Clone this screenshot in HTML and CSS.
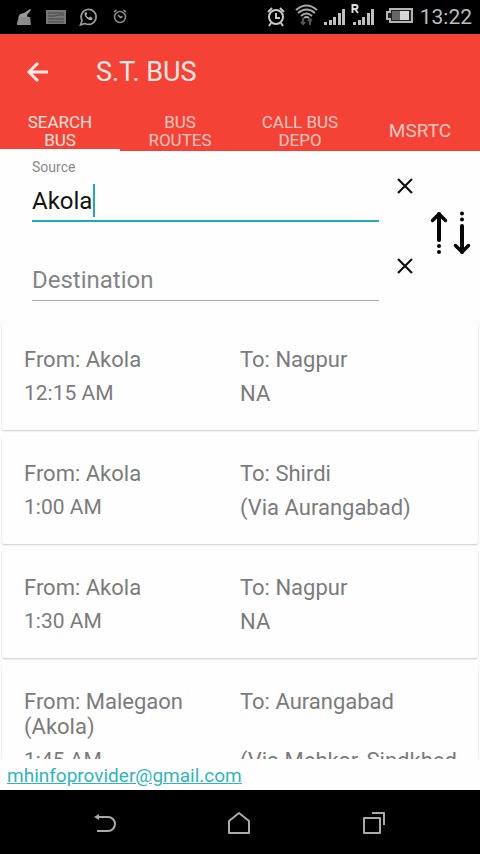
FILE: index.html
```html
<!DOCTYPE html>
<html lang="en">
<head>
<meta charset="utf-8">
<meta name="viewport" content="width=device-width, initial-scale=1">
<title>S.T. BUS</title>
<link rel="stylesheet" href="styles.css">
</head>
<body>
<div class="screen">
  <div class="status">
    <svg class="notices" width="132" height="34" viewBox="0 0 132 34" aria-hidden="true">
      <path d="M30 9l1 1-4 5 1 3H18l2-4 4-1z" fill="#9a9a9a"/>
      <path d="M19 17h11l1 8H17c0-3 1-6 2-8z" fill="#8c8c8c"/>
      <rect x="46" y="10" width="20" height="14" fill="#777"/>
      <path d="M48 13h16M48 16h7l3-1h6M48 19h16M48 22h16" stroke="#444" fill="none"/>
      <path d="M80.500 25l1.500-4.500a7.500 7.500 0 1 1 3 3z" fill="none" stroke="#999" stroke-width="1.700"/>
      <path d="M85 12.500c-2 3 3 8.500 7 7.500l.5-2-2.500-1.500-1.300 1.200c-1.200-.5-2-1.500-2.500-2.700l1-1-1-2.200z" fill="#aaa"/>
      <circle cx="120" cy="17" r="5.500" fill="none" stroke="#888" stroke-width="1.500"/>
      <path d="M114 12l2.500-2M126 12l-2.500-2M118 15l2.500 2.500 2-1" stroke="#999" stroke-width="1.500" fill="none"/>
    </svg>
    <svg class="signals" width="150" height="34" viewBox="0 0 150 34" aria-hidden="true">
      <g fill="none" stroke="#c8c8c8" stroke-width="2">
        <circle cx="12" cy="17" r="7"/>
        <path d="M4 12l4-4M20 12l-4-4M7 23l-2 3M17 23l2 3M12 13v5h4"/>
      </g>
      <g fill="none" stroke="#a8a8a8" stroke-width="2">
        <path d="M32 10q10.500-9 21 0M34 13q8.500-7 17 0M37 16q5.500-5 11 0M40 18q2.500-2 5 0"/>
      </g>
      <path d="M39 18v6M37 22l2 2 2-2M46 25v-6M44 21l2-2 2 2" stroke="#555" stroke-width="2" fill="none"/>
      <g fill="#c0c0c0">
        <path d="M60 22h3v3h-3zM65 20h3v5h-3zM69 17h3v8h-3zM74 13h3v12h-3zM78 9h3v16h-3z"/>
        <path d="M89 22h3v3h-3zM94 20h3v5h-3zM98 17h3v8h-3zM103 13h3v12h-3zM107 9h3v16h-3z"/>
      </g>
      <path d="M88.500 13V5h3a2 2 0 0 1 0 4h-3M91 9l3 4" stroke="#ddd" stroke-width="2" fill="none"/>
      <path d="M126 9h22v13h-22v-3h-3v-7h3z" fill="#222" stroke="#b5b5b5" stroke-width="2"/>
      <path d="M128 11h8v9h-8z" fill="#666"/>
      <path d="M136 11h9v9h-9z" fill="#d5d5d5"/>
    </svg>
    <span class="clock">13:22</span>
  </div>

  <header class="top">
    <div class="bar">
      <button class="back" aria-label="Back">
        <svg width="24" height="24" viewBox="0 0 24 24" aria-hidden="true"><path d="M12 3l-9 9 9 9M3 12h19" fill="none" stroke="#ffe9e4" stroke-width="3"/></svg>
      </button>
      <h1>S.T. BUS</h1>
    </div>
    <nav class="tabs">
      <a class="on" href="#search">SEARCH<br>BUS</a>
      <a href="#routes">BUS<br>ROUTES</a>
      <a href="#depo">CALL BUS<br>DEPO</a>
      <a class="single" href="#msrtc">MSRTC</a>
    </nav>
  </header>

  <form class="search">
    <div class="fields">
      <div class="field active">
        <label for="source">Source</label>
        <input id="source" type="text" value="Akola">
        <span class="caret"></span>
      </div>
      <div class="field">
        <input id="destination" type="text" placeholder="Destination" aria-label="Destination">
      </div>
    </div>
    <div class="clears">
      <button type="button" aria-label="Clear source"><svg width="16" height="16" viewBox="0 0 16 16" aria-hidden="true"><path d="M1 1l14 14M15 1L1 15" stroke="#111" stroke-width="2.200"/></svg></button>
      <button type="button" aria-label="Clear destination"><svg width="16" height="16" viewBox="0 0 16 16" aria-hidden="true"><path d="M1 1l14 14M15 1L1 15" stroke="#111" stroke-width="2.200"/></svg></button>
    </div>
    <button type="button" class="swap" aria-label="Swap source and destination">
      <svg width="42" height="44" viewBox="0 0 42 44" aria-hidden="true">
        <g fill="none" stroke="#050505" stroke-width="4" stroke-linecap="round" stroke-linejoin="round">
          <path d="M9 29V3"/><path d="M2.500 9.500L9 3l6.500 6.500" stroke-width="3.500"/>
          <path d="M32 15v26"/><path d="M25.500 34.500L32 41l6.500-6.500" stroke-width="3.500"/>
        </g>
        <g fill="#050505"><circle cx="9" cy="35" r="2"/><circle cx="9" cy="41" r="2"/><circle cx="32" cy="2.500" r="2"/><circle cx="32" cy="8.500" r="2"/></g>
      </svg>
    </button>
  </form>

  <main class="list">
    <article class="card"><p>From: Akola</p><p>To: Nagpur</p><p class="time">12:15 AM</p><p class="via">NA</p></article>
    <article class="card"><p>From: Akola</p><p>To: Shirdi</p><p class="time">1:00 AM</p><p class="via">(Via Aurangabad)</p></article>
    <article class="card"><p>From: Akola</p><p>To: Nagpur</p><p class="time">1:30 AM</p><p class="via">NA</p></article>
    <article class="card"><p>From: Malegaon (Akola)</p><p>To: Aurangabad</p><p class="time">1:45 AM</p><p class="via">(Via Mehkar, Sindkhed</p></article>
  </main>

  <footer class="contact"><a href="mailto:mhinfoprovider@gmail.com">mhinfoprovider@gmail.com</a></footer>

  <div class="keys">
    <button aria-label="Back"><svg width="24" height="24" viewBox="0 0 24 24" aria-hidden="true"><path d="M5 6h11a7 7 0 0 1 0 14H5" fill="none" stroke="#aaa" stroke-width="2"/><path d="M2 6l5-3v6z" fill="#aaa"/></svg></button>
    <button aria-label="Home"><svg width="24" height="24" viewBox="0 0 24 24" aria-hidden="true"><path d="M2 10L12 2l10 8v12H2z" fill="none" stroke="#aaa" stroke-width="2" stroke-linejoin="round"/></svg></button>
    <button aria-label="Recent apps"><svg width="24" height="24" viewBox="0 0 24 24" aria-hidden="true"><path d="M2 7h16v15H2zM10 2h12v12" fill="none" stroke="#aaa" stroke-width="2" stroke-linejoin="round"/></svg></button>
  </div>
</div>
</body>
</html>
```
FILE: styles.css
```css
* { box-sizing: border-box; }
body { margin: 0; font-family: Roboto, "Liberation Sans", sans-serif; background: #fefefe; }
button { border: 0; padding: 0; background: none; display: flex; align-items: center; justify-content: center; }
h1, p { margin: 0; font-weight: 400; }

.screen { display: flex; flex-direction: column; height: 100vh; overflow: hidden; }

.status { flex: none; display: flex; align-items: center; height: 34px; background: #000; padding-right: 8px; }
.signals { margin-left: auto; }
.clock { margin-left: 6px; font-size: 21px; line-height: 34px; color: #bdbdbd; }

.top { flex: none; background: #f44336; color: #ffe9e4; }
.bar { display: flex; align-items: center; gap: 46px; height: 76px; padding-left: 26px; }
.bar h1 { font-size: 27px; line-height: 32px; }
.tabs { display: grid; grid-template-columns: repeat(4, 1fr); height: 41px; }
.tabs a { display: flex; align-items: center; justify-content: center; text-align: center; font-size: 17px; line-height: 18px; color: #ffc9c1; text-decoration: none; }
.tabs .on { color: #ffe3de; border-bottom: 3px solid #fff; padding-top: 3px; }
.tabs .single { font-size: 19px; }

.search { flex: none; display: flex; height: 169px; padding: 8px 8px 0 32px; }
.fields { flex: 1; display: flex; flex-direction: column; gap: 40px; }
.field { position: relative; display: flex; flex-direction: column; }
.field label { font-size: 14px; line-height: 16px; color: #888; }
.field input { width: 100%; height: 39px; padding: 0 0 2px; border: 0; border-bottom: 1px solid #aaa; border-radius: 0; background: none; outline: 0; font: 24px/34px Roboto, "Liberation Sans", sans-serif; color: #151515; }
.field input::placeholder { color: #858585; opacity: 1; }
.active input { height: 47px; padding: 8px 0 1px; border-bottom: 2px solid #1fa9c0; }
.caret { position: absolute; left: 61px; top: 25px; width: 2px; height: 33px; background: #1fa9c0; }
.clears { display: flex; flex-direction: column; gap: 48px; padding: 11px 0 0 10px; }
.clears button { width: 32px; height: 32px; }
.swap { width: 42px; height: 44px; margin: 52px 0 0 9px; }

.list { flex: 1; min-height: 0; overflow: hidden; display: flex; flex-direction: column; gap: 6px; padding: 2px; }
.card { flex: none; display: grid; grid-template-columns: repeat(2, minmax(0, 1fr)); row-gap: 9px; padding: 25px 22px 24px; font-size: 22px; line-height: 25px; color: #7b7b7b; background: #fefefe; border-radius: 2px; box-shadow: 0 1px 2px rgba(0, 0, 0, .2); }
.time { font-size: 21px; }
.via { white-space: nowrap; }

.contact { flex: none; height: 31px; padding: 5px 7px; font-size: 19px; line-height: 24px; }
.contact a { color: #2fb5bd; }

.keys { flex: none; display: flex; align-items: center; justify-content: center; gap: 103px; height: 64px; padding: 2px 2px 0 0; background: #000; }
.keys button { width: 32px; height: 32px; }
```
